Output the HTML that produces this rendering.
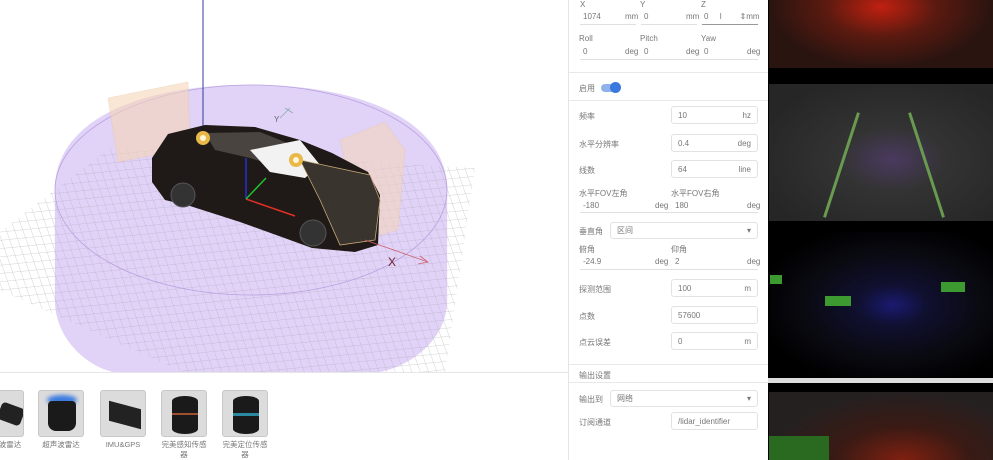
<!DOCTYPE html>
<html><head><meta charset="utf-8"><style>
*{margin:0;padding:0;box-sizing:border-box}
body{width:993px;height:460px;overflow:hidden;background:#fff;font-family:"Liberation Sans","Noto Sans CJK SC",sans-serif;font-size:8px;color:#666;position:relative}
.a{position:absolute}
.lbl{position:absolute;font-size:8px;color:#777}
.inp{position:absolute;border:1px solid #e2e2e2;border-radius:3px;background:#fff;font-size:8px;color:#777;padding:0 6px;display:flex;align-items:center;justify-content:space-between}
.sep{position:absolute;left:569px;width:199px;height:1px;background:#e8e8e8}
.ul{position:absolute;height:1px;background:#e0e0e0}
.tile{position:absolute;top:390px;width:46px;height:47px;background:#dcdcdc;border:1px solid #c8c8c8;border-radius:3px;overflow:hidden}
.tl{position:absolute;font-size:7.5px;color:#777;text-align:center;line-height:10px}
</style></head><body>
<svg class="a" style="left:0;top:0" width="568" height="373" viewBox="0 0 568 373">
<defs>
<pattern id="g" width="8" height="8" patternUnits="userSpaceOnUse" patternTransform="matrix(1,-0.1,0.35,1,0,0)">
<path d="M0 0H8M0 0V8" stroke="#999" stroke-width="0.5" fill="none"/>
</pattern>
</defs>
<rect width="568" height="373" fill="#fff"/>
<path d="M55,190 C55,120 140,85 250,85 C370,85 447,125 447,190 L447,300 C447,345 400,372 370,373 L120,373 C90,370 55,340 55,300 Z" fill="#e0d2f8" opacity="0.75"/>
<polygon points="0,232 110,148 475,168 445,373 185,373 0,290" fill="url(#g)" opacity="0.85"/>
<path d="M55,190 C55,120 140,85 250,85 C370,85 447,125 447,190 L447,300 C447,345 400,372 370,373 L120,373 C90,370 55,340 55,300 Z" fill="#c8b0f0" opacity="0.2" stroke="#b8a0e0" stroke-width="0.7"/>
<ellipse cx="251" cy="190" rx="196" ry="105" fill="none" stroke="#b8a0e0" stroke-width="0.8"/>
<polygon points="108,98 188,82 190,148 118,162" fill="#f6d6b8" opacity="0.6" stroke="#e8c49c" stroke-width="0.6"/>
<polygon points="340,140 385,122 405,150 398,230 362,240" fill="#f6d6b8" opacity="0.55" stroke="#e8c49c" stroke-width="0.6"/>
<line x1="203" y1="0" x2="203" y2="140" stroke="#3338a0" stroke-width="1"/>
<polygon points="152,158 168,134 205,125 255,127 300,140 332,153 368,172 380,195 378,245 355,252 312,248 290,240 240,222 190,206 165,200 152,182" fill="#1f1a17"/>
<polygon points="205,133 260,132 300,148 290,170 250,158 215,150" fill="#4a4440"/>
<polygon points="250,150 300,140 320,165 305,178 270,172" fill="#f2f2f2"/>
<polygon points="300,160 370,175 380,200 375,240 340,245 320,200" fill="#3a342e" stroke="#c8a878" stroke-width="0.8"/>
<circle cx="183" cy="195" r="12" fill="#333" stroke="#555"/><circle cx="313" cy="233" r="13" fill="#333" stroke="#555"/>
<circle cx="203" cy="138" r="7" fill="#e8b848"/><circle cx="203" cy="138" r="3" fill="#fff5d8"/>
<circle cx="296" cy="160" r="7" fill="#e8b848"/><circle cx="296" cy="160" r="3" fill="#fff5d8"/>
<line x1="246" y1="199" x2="295" y2="216" stroke="#e03020" stroke-width="1.5"/>
<line x1="246" y1="199" x2="246" y2="158" stroke="#2030d0" stroke-width="1.5"/>
<line x1="246" y1="199" x2="266" y2="178" stroke="#20c030" stroke-width="1.5"/>
<line x1="365" y1="240" x2="428" y2="262" stroke="#d06070" stroke-width="0.8"/>
<path d="M420,256 L428,262 L418,264" stroke="#d06070" fill="none" stroke-width="0.8"/>
<text x="388" y="266" font-size="12" fill="#702030" font-family="Liberation Sans">X</text>
<path d="M280,118 L290,108 M285,108 L293,113" stroke="#8aa" fill="none" stroke-width="0.8"/>
<text x="274" y="122" font-size="8" fill="#666" font-family="Liberation Sans">Y</text>
</svg>
<div class="a" style="left:0;top:372px;width:568px;height:1px;background:#e6e6e6"></div>
<div class="a" style="left:568px;top:0;width:1px;height:460px;background:#e4e4e4"></div>

<div class="tile" style="left:-22px"><div class="a" style="left:20px;top:14px;width:24px;height:18px;background:#222;border-radius:4px;transform:rotate(20deg)"></div></div>
<div class="tile" style="left:38px"><div class="a" style="left:8px;top:4px;width:30px;height:10px;background:#3a7ae0;border-radius:50%;filter:blur(2px)"></div><div class="a" style="left:9px;top:10px;width:28px;height:30px;background:#1a1a1a;border-radius:4px 4px 8px 8px"></div></div>
<div class="tile" style="left:100px"><div class="a" style="left:8px;top:14px;width:32px;height:20px;background:#222;transform:skewY(15deg)"></div></div>
<div class="tile" style="left:161px"><div class="a" style="left:10px;top:5px;width:26px;height:38px;background:#1a1a1a;border-radius:13px/5px"></div><div class="a" style="left:10px;top:22px;width:26px;height:2px;background:#a05030"></div></div>
<div class="tile" style="left:222px"><div class="a" style="left:10px;top:5px;width:26px;height:38px;background:#1a1a1a;border-radius:13px/5px"></div><div class="a" style="left:10px;top:22px;width:26px;height:3px;background:#2a8aa0"></div></div>
<div class="tl" style="left:-10px;top:440px;width:40px">波雷达</div>
<div class="tl" style="left:31px;top:440px;width:60px">超声波雷达</div>
<div class="tl" style="left:93px;top:440px;width:60px">IMU&amp;GPS</div>
<div class="tl" style="left:156px;top:440px;width:56px">完美感知传感<br>器</div>
<div class="tl" style="left:217px;top:440px;width:56px">完美定位传感<br>器</div>

<div class="lbl" style="left:580px;top:0">X</div><div class="lbl" style="left:640px;top:0">Y</div><div class="lbl" style="left:701px;top:0">Z</div>
<div class="lbl" style="left:583px;top:12px">1074</div><div class="lbl" style="left:625px;top:12px">mm</div>
<div class="lbl" style="left:644px;top:12px">0</div><div class="lbl" style="left:686px;top:12px">mm</div>
<div class="lbl" style="left:704px;top:12px">0 &nbsp;&nbsp;&nbsp;&nbsp;I &nbsp;&nbsp;&nbsp;&nbsp;&nbsp;&nbsp;&nbsp;⇕mm</div>
<div class="ul" style="left:580px;top:24px;width:56px"></div><div class="ul" style="left:641px;top:24px;width:56px"></div><div class="ul" style="left:702px;top:24px;width:56px;background:#999"></div>
<div class="lbl" style="left:579px;top:34px">Roll</div><div class="lbl" style="left:640px;top:34px">Pitch</div><div class="lbl" style="left:701px;top:34px">Yaw</div>
<div class="lbl" style="left:583px;top:47px">0</div><div class="lbl" style="left:625px;top:47px">deg</div>
<div class="lbl" style="left:644px;top:47px">0</div><div class="lbl" style="left:686px;top:47px">deg</div>
<div class="lbl" style="left:704px;top:47px">0</div><div class="lbl" style="left:747px;top:47px">deg</div>
<div class="ul" style="left:580px;top:59px;width:178px"></div>
<div class="sep" style="top:72px"></div>
<div class="lbl" style="left:579px;top:83px">启用</div>
<div class="a" style="left:601px;top:84px;width:18px;height:8px;border-radius:4px;background:#8fb2ec"></div>
<div class="a" style="left:610px;top:82px;width:11px;height:11px;border-radius:50%;background:#3a78e0"></div>
<div class="sep" style="top:100px"></div>
<div class="lbl" style="left:579px;top:111px">频率</div><div class="inp" style="left:671px;top:106px;width:87px;height:18px"><span>10</span><span>hz</span></div>
<div class="lbl" style="left:579px;top:139px">水平分辨率</div><div class="inp" style="left:671px;top:134px;width:87px;height:18px"><span>0.4</span><span>deg</span></div>
<div class="lbl" style="left:579px;top:165px">线数</div><div class="inp" style="left:671px;top:160px;width:87px;height:18px"><span>64</span><span>line</span></div>
<div class="lbl" style="left:579px;top:188px">水平FOV左角</div><div class="lbl" style="left:671px;top:188px">水平FOV右角</div>
<div class="lbl" style="left:583px;top:201px">-180</div><div class="lbl" style="left:655px;top:201px">deg</div>
<div class="lbl" style="left:675px;top:201px">180</div><div class="lbl" style="left:747px;top:201px">deg</div>
<div class="ul" style="left:580px;top:212px;width:178px"></div>
<div class="lbl" style="left:579px;top:226px">垂直角</div><div class="inp" style="left:610px;top:222px;width:148px;height:17px"><span>区间</span><span>▾</span></div>
<div class="lbl" style="left:579px;top:244px">俯角</div><div class="lbl" style="left:671px;top:244px">仰角</div>
<div class="lbl" style="left:583px;top:257px">-24.9</div><div class="lbl" style="left:655px;top:257px">deg</div>
<div class="lbl" style="left:675px;top:257px">2</div><div class="lbl" style="left:747px;top:257px">deg</div>
<div class="ul" style="left:580px;top:269px;width:178px"></div>
<div class="lbl" style="left:579px;top:284px">探测范围</div><div class="inp" style="left:671px;top:279px;width:87px;height:18px"><span>100</span><span>m</span></div>
<div class="lbl" style="left:579px;top:311px">点数</div><div class="inp" style="left:671px;top:306px;width:87px;height:18px"><span>57600</span><span></span></div>
<div class="lbl" style="left:579px;top:337px">点云误差</div><div class="inp" style="left:671px;top:332px;width:87px;height:18px"><span>0</span><span>m</span></div>
<div class="sep" style="top:364px"></div>
<div class="lbl" style="left:579px;top:370px">输出设置</div>
<div class="sep" style="top:382px"></div>
<div class="lbl" style="left:579px;top:394px">输出到</div><div class="inp" style="left:610px;top:390px;width:148px;height:17px"><span>网络</span><span>▾</span></div>
<div class="lbl" style="left:579px;top:417px">订阅通道</div><div class="inp" style="left:671px;top:412px;width:87px;height:18px"><span>/lidar_identifier</span><span></span></div>

<div class="a" style="left:768px;top:0;width:225px;height:460px;background:#000"></div>
<div class="a" style="left:769px;top:0;width:224px;height:68px;background:radial-gradient(ellipse at 50% 10%,#c02010 0,#5a1a10 35%,#2a1410 70%)"></div>
<div class="a" style="left:769px;top:84px;width:224px;height:137px;background:radial-gradient(ellipse at 55% 55%,#4a3a60 0,#333 30%,#262626 80%)"></div>
<div class="a" style="left:840px;top:110px;width:3px;height:110px;background:#6a9a50;transform:rotate(18deg)"></div>
<div class="a" style="left:925px;top:110px;width:3px;height:110px;background:#6a9a50;transform:rotate(-18deg)"></div>
<div class="a" style="left:770px;top:232px;width:223px;height:146px;background:radial-gradient(ellipse at 55% 50%,#1a1a70 0,#101030 20%,#0a0a12 50%,#000 80%)"></div>
<div class="a" style="left:825px;top:296px;width:26px;height:10px;background:#3c9a30"></div>
<div class="a" style="left:941px;top:282px;width:24px;height:10px;background:#3c9a30"></div>
<div class="a" style="left:770px;top:275px;width:12px;height:9px;background:#3c9a30"></div>
<div class="a" style="left:768px;top:378px;width:225px;height:5px;background:#ddd"></div>
<div class="a" style="left:769px;top:392px;width:224px;height:68px;background:radial-gradient(ellipse at 60% 100%,#802010 0,#3a1a14 35%,#242020 70%)"></div>
<div class="a" style="left:769px;top:436px;width:60px;height:24px;background:#2a6a20"></div>
</body></html>
